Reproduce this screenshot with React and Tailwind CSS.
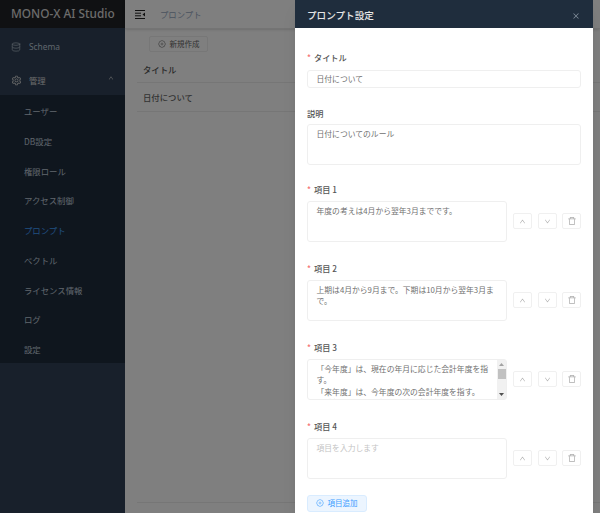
import { AiOutlineSetting, AiOutlineUp, AiOutlineDown, AiOutlineDelete, AiOutlineClose, AiOutlinePlusCircle } from 'react-icons/ai'
import { Database } from 'lucide-react'

const subMenu = ['ユーザー', 'DB設定', '権限ロール', 'アクセス制御', 'プロンプト', 'ベクトル', 'ライセンス情報', 'ログ', '設定']

function Label({ required, children }) {
  return (
    <div className="flex items-center h-[12px] text-[8.2px] font-medium text-[#555]">
      {required && <span className="mr-[3px] text-[#f56c6c]">*</span>}
      {children}
    </div>
  )
}

function ItemButton({ children }) {
  return (
    <button className="w-[19px] h-[16px] flex items-center justify-center bg-white border border-[#f0f0f0] rounded-[2px] text-[#aaa] text-[7px]">
      {children}
    </button>
  )
}

function Item({ label, value, placeholder, scroll }) {
  return (
    <div className="mb-[21px]">
      <Label required>{label}</Label>
      <div className="mt-[5px] flex items-center">
        <div className="relative w-[200px] h-[41px] shrink-0">
          <textarea
            readOnly
            defaultValue={value}
            placeholder={placeholder}
            className="block w-full h-full resize-none overflow-hidden bg-white border border-[#efefef] rounded-[3px] pl-[8.5px] pr-[9px] pt-[3px] pb-0 text-[7.8px] leading-[11.5px] text-[#707070] placeholder:text-[#c4c4c4] outline-none"
          />
          {scroll && (
            <div className="absolute right-[1px] top-[1px] bottom-[1px] w-[9px] flex flex-col items-center bg-[#f1f1f1]">
              <div className="h-[9px] flex items-center text-[#a3a3a3]">
                <svg width="5" height="3" viewBox="0 0 5 3"><path d="M2.5 0L5 3H0z" fill="currentColor" /></svg>
              </div>
              <div className="w-[8px] h-[10px] bg-[#c1c1c1]" />
              <div className="mt-auto h-[9px] flex items-center text-[#505050]">
                <svg width="5" height="3" viewBox="0 0 5 3"><path d="M2.5 3L5 0H0z" fill="currentColor" /></svg>
              </div>
            </div>
          )}
        </div>
        <div className="ml-[6px] flex gap-[5.5px]">
          <ItemButton><AiOutlineUp /></ItemButton>
          <ItemButton><AiOutlineDown /></ItemButton>
          <ItemButton><AiOutlineDelete className="text-[10px]" /></ItemButton>
        </div>
      </div>
    </div>
  )
}

export default function App() {
  return (
    <div className="relative h-screen overflow-hidden flex bg-white font-['Noto_Sans_CJK_JP','Noto_Sans',sans-serif]">
      {/* Sidebar */}
      <aside className="w-[125px] shrink-0 flex flex-col bg-[#304156]">
        <div className="h-[28px] flex items-center pl-[11px] bg-[#202226] text-[#d8d8d8] text-[11.8px] font-medium font-['Noto_Sans',sans-serif] whitespace-nowrap">
          MONO-X AI Studio
        </div>
        <div className="h-[35px] pt-[3px] flex items-center pl-[11px] text-[#bfcbd9] text-[8.4px]">
          <Database size={10} strokeWidth={1.5} className="mr-[8px]" />
          <span className="font-['Noto_Sans',sans-serif]">Schema</span>
        </div>
        <div className="h-[32px] pt-[2px] flex items-center pl-[11px] pr-[11px] text-[#d8d8d8] text-[8.4px]">
          <AiOutlineSetting className="text-[11px] mr-[7px]" />
          <span>管理</span>
          <AiOutlineUp className="ml-auto -mt-[4px] text-[6px]" />
        </div>
        <div className="bg-[#1f2d3d] h-[268px] pt-[1.5px] flex flex-col">
          {subMenu.map((name) => (
            <div
              key={name}
              className={`h-[29.75px] shrink-0 flex items-center pl-[24px] text-[8.4px] ${name === 'プロンプト' ? 'text-[#409eff]' : 'text-[#bfcbd9]'}`}
            >
              {name}
            </div>
          ))}
        </div>
      </aside>

      {/* Main */}
      <main className="flex-1 flex flex-col">
        <div className="h-[29px] shrink-0 flex items-center pl-[10px] border-b border-[#e8e8e8] shadow-sm">
          <svg width="10" height="9" viewBox="0 0 10 9" className="text-[#222]">
            <path d="M0 .5h10M0 3.2h6M0 5.8h6M0 8.5h10" stroke="currentColor" strokeWidth="1" />
            <path d="M10 2.6v3.8L7.5 4.5z" fill="currentColor" />
          </svg>
          <span className="ml-[15px] text-[8.4px] text-[#97a8be]">プロンプト</span>
        </div>
        <div className="pl-[12px] pt-[6.5px]">
          <button className="ml-[12px] w-[59px] h-[16px] flex items-center justify-center gap-[4px] bg-white border border-[#eeeeee] rounded-[2px] text-[7.5px] text-[#666]">
            <AiOutlinePlusCircle className="text-[8px]" />
            新規作成
          </button>
          <div className="mt-[11.5px] h-[20px] pb-[6px] flex items-center pl-[6px] border-b border-[#ececec] text-[8.4px] font-medium text-[#555]">タイトル</div>
          <div className="h-[29px] flex items-center pl-[6px] border-b border-[#ececec] text-[8.4px] font-medium text-[#666]">日付について</div>
          <div className="mt-[390px] border-b border-[#ececec]" />
        </div>
      </main>

      {/* Drawer overlay */}
      <div className="absolute inset-0 flex justify-end pr-[7px] bg-black/50">
        <div className="w-[298px] h-full flex flex-col bg-white overflow-hidden shadow-lg">
          <div className="h-[28px] shrink-0 flex items-center justify-between pt-[2px] pl-[12px] pr-[13px] bg-[#1f2d3d]">
            <span className="text-[9.6px] font-medium text-[#e6e6e6]">プロンプト設定</span>
            <AiOutlineClose className="mt-[2px] text-[#8a96a3] text-[8px]" />
          </div>
          <div className="px-[12px] pt-[23px]">
            <div className="mb-[19px]">
              <Label required>タイトル</Label>
              <input
                readOnly
                defaultValue="日付について"
                className="mt-[7px] block w-full h-[18px] bg-white border border-[#efefef] rounded-[3px] pl-[8.5px] pr-[9px] pb-[2px] text-[7.8px] text-[#707070] outline-none"
              />
            </div>
            <div className="mb-[18.5px]">
              <Label>説明</Label>
              <textarea
                readOnly
                defaultValue="日付についてのルール"
                className="mt-[5px] block w-full h-[41px] resize-none overflow-hidden bg-white border border-[#efefef] rounded-[3px] pl-[8.5px] pr-[9px] py-[3px] text-[7.8px] leading-[11.5px] text-[#707070] outline-none"
              />
            </div>
            <Item label="項目 1" value="年度の考えは4月から翌年3月までです。" />
            <Item label="項目 2" value="上期は4月から9月まで。下期は10月から翌年3月まで。" />
            <Item
              label="項目 3"
              scroll
              value={'「今年度」は、現在の年月に応じた会計年度を指す。\n「来年度」は、今年度の次の会計年度を指す。\n「前年度」は、今年度の前の会計年度を指す。'}
            />
            <Item label="項目 4" placeholder="項目を入力します" />
            <button className="-mt-[5px] -ml-[0.5px] w-[60px] h-[17px] flex items-center justify-center gap-[4px] bg-[#ecf5ff] border border-[#d9ecff] rounded-[3px] text-[7.5px] text-[#409eff]">
              <AiOutlinePlusCircle className="text-[8px]" />
              項目追加
            </button>
          </div>
        </div>
      </div>
    </div>
  )
}
